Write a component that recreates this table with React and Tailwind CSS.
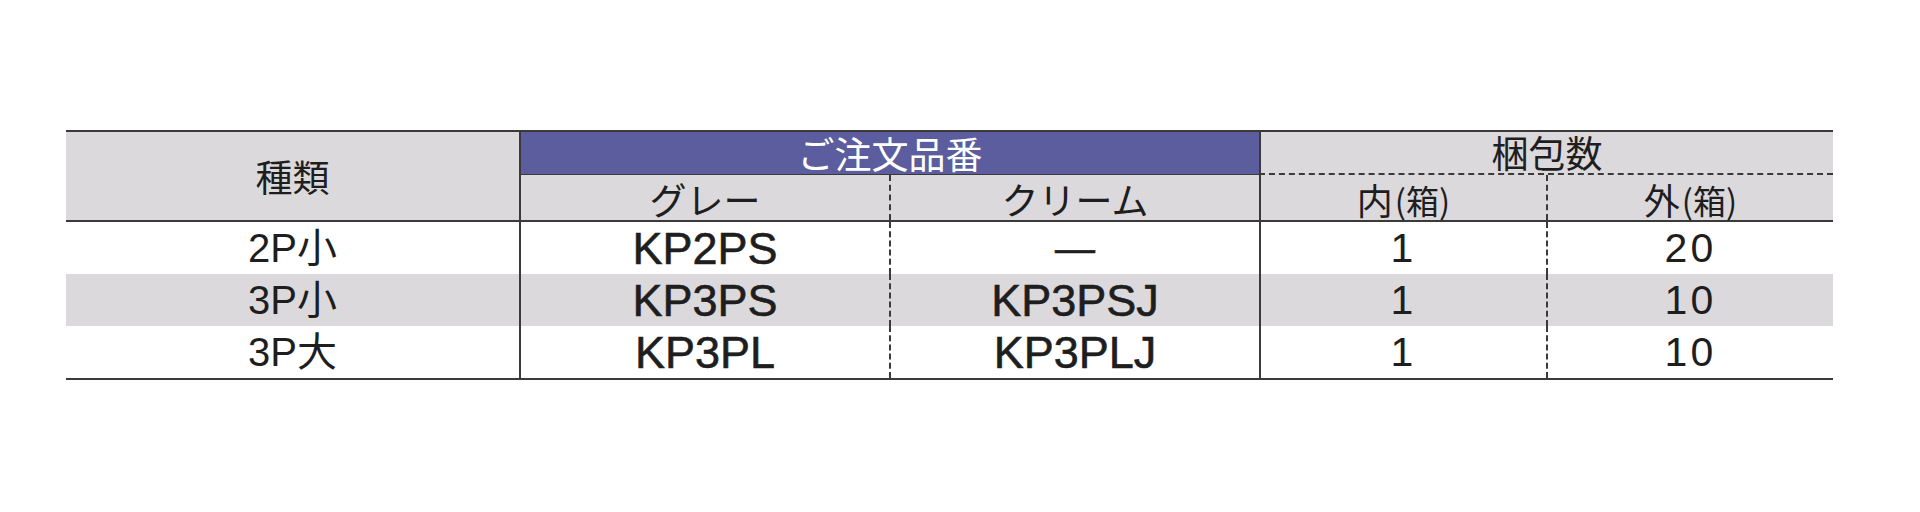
import React from 'react';

// 梱包数テーブル
const rows = [
    { kind: '2P小', gray: 'KP2PS', cream: '—', inner: '1', outer: '20', shade: false },
    { kind: '3P小', gray: 'KP3PS', cream: 'KP3PSJ', inner: '1', outer: '10', shade: true },
    { kind: '3P大', gray: 'KP3PL', cream: 'KP3PLJ', inner: '1', outer: '10', shade: false },
];

const jp = "font-['Noto_Sans_CJK_JP',sans-serif]";
const num = "font-['Liberation_Sans','Noto_Sans_CJK_JP',sans-serif]";
const code = "font-['Liberation_Sans',sans-serif] text-[45px] leading-none [-webkit-text-stroke:0.6px_#1e1e1e]";

const Box = ({ ch }) => (
    <span className="flex items-end leading-none">
        <span className="text-[36px]">{ch}</span>
        <span className="ml-[2px] text-[33px]">(箱)</span>
    </span>
);

const App = () => {
    return (
        <div className="min-h-[512px] bg-white pl-[66px] pt-[130px] text-[#1e1e1e]">
            <div className="w-[1767px] border-t-2 border-b-2 border-[#3a3a3a]">
                {/* --- ヘッダー --- */}
                <div className="grid grid-cols-[453px_370px_370px_287px_287px] grid-rows-[43px_45px] border-b-2 border-[#3a3a3a] bg-[#dcd9dc]">
                    <div className={`row-span-2 flex items-center justify-center text-[37px] leading-none ${jp}`}>種類</div>
                    <div className={`col-span-2 flex items-center justify-center border-l-2 border-b border-[#3a3a3a] bg-[#5b5d9e] text-[37px] leading-none text-white ${jp}`}>ご注文品番</div>
                    <div className={`col-span-2 flex items-center justify-center border-l-2 border-b-2 border-[#3a3a3a] text-[37px] leading-none ${jp}`} style={{ borderBottomStyle: 'dashed' }}>梱包数</div>
                    <div className={`flex items-center justify-center border-l-2 border-[#3a3a3a] pt-1 text-[37px] leading-none ${jp}`}>グレー</div>
                    <div className={`flex items-center justify-center border-l-2 border-dashed border-[#3a3a3a] pt-1 text-[37px] leading-none ${jp}`}>クリーム</div>
                    <div className={`flex items-end justify-center border-l-2 border-[#3a3a3a] pb-[3px] ${jp}`}>
                        <Box ch="内" />
                    </div>
                    <div className={`flex items-end justify-center border-l-2 border-dashed border-[#3a3a3a] pb-[3px] ${jp}`}>
                        <Box ch="外" />
                    </div>
                </div>

                {/* --- 本体 --- */}
                {rows.map((r) => (
                    <div key={r.kind} className={`grid h-[52px] grid-cols-[453px_370px_370px_287px_287px] ${r.shade ? 'bg-[#dcd9dc]' : 'bg-white'}`}>
                        <div className={`flex items-center justify-center text-[40px] leading-none ${num}`}>{r.kind}</div>
                        <div className={`flex items-center justify-center border-l-2 border-[#3a3a3a] ${code}`}>{r.gray}</div>
                        {r.cream === '—' ? (
                            <div className="flex items-center justify-center border-l-2 border-dashed border-[#3a3a3a] font-['Liberation_Sans',sans-serif] text-[40px] leading-none [-webkit-text-stroke:0.6px_#1e1e1e]">—</div>
                        ) : (
                            <div className={`flex items-center justify-center border-l-2 border-dashed border-[#3a3a3a] ${code}`}>{r.cream}</div>
                        )}
                        <div className={`flex items-center justify-center border-l-2 border-[#3a3a3a] text-[41px] leading-none tracking-[0.08em] ${num}`}>{r.inner}</div>
                        <div className={`flex items-center justify-center border-l-2 border-dashed border-[#3a3a3a] text-[41px] leading-none tracking-[0.08em] ${num}`}>{r.outer}</div>
                    </div>
                ))}
            </div>
        </div>
    );
};

export default App;
